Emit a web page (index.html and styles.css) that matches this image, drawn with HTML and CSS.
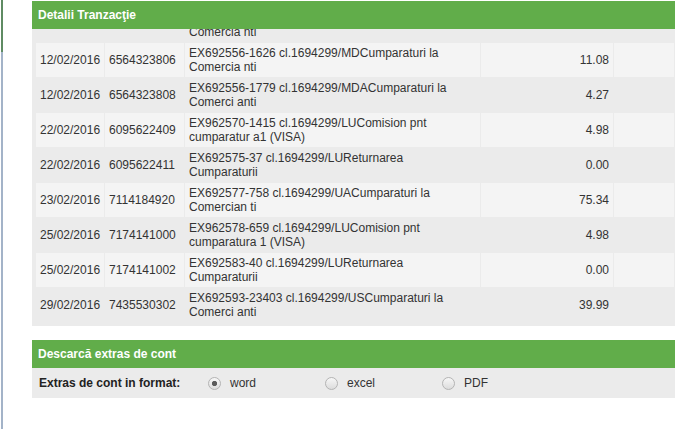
FILE: index.html
```html
<!DOCTYPE html>
<html lang="ro">
<head>
<meta charset="utf-8">
<title>Detalii Tranzacţie</title>
<link rel="stylesheet" href="styles.css">
</head>
<body>
<div class="screen">
  <div class="edge"></div>
  <main class="content">
    <section class="panel">
      <h2 class="panel-title">Detalii Tranzacţie</h2>
      <div class="scroll">
        <table class="tx">
          <colgroup>
            <col class="c-date"><col class="c-ref"><col class="c-desc"><col class="c-amt"><col class="c-extra">
          </colgroup>
          <tbody>
            <tr class="row-gray"><td></td><td></td><td>EX692556-1625 cl.1694299/MDCumparaturi la<br>Comercia nti</td><td class="amt"></td><td></td></tr>
            <tr class="row-light"><td>12/02/2016</td><td>6564323806</td><td>EX692556-1626 cl.1694299/MDCumparaturi la<br>Comercia nti</td><td class="amt">11.08</td><td></td></tr>
            <tr class="row-gray"><td>12/02/2016</td><td>6564323808</td><td>EX692556-1779 cl.1694299/MDACumparaturi la<br>Comerci anti</td><td class="amt">4.27</td><td></td></tr>
            <tr class="row-light"><td>22/02/2016</td><td>6095622409</td><td>EX962570-1415 cl.1694299/LUComision pnt<br>cumparatur a1 (VISA)</td><td class="amt">4.98</td><td></td></tr>
            <tr class="row-gray"><td>22/02/2016</td><td>6095622411</td><td>EX692575-37 cl.1694299/LUReturnarea<br>Cumparaturii</td><td class="amt">0.00</td><td></td></tr>
            <tr class="row-light"><td>23/02/2016</td><td>7114184920</td><td>EX692577-758 cl.1694299/UACumparaturi la<br>Comercian ti</td><td class="amt">75.34</td><td></td></tr>
            <tr class="row-gray"><td>25/02/2016</td><td>7174141000</td><td>EX962578-659 cl.1694299/LUComision pnt<br>cumparatura 1 (VISA)</td><td class="amt">4.98</td><td></td></tr>
            <tr class="row-light"><td>25/02/2016</td><td>7174141002</td><td>EX692583-40 cl.1694299/LUReturnarea<br>Cumparaturii</td><td class="amt">0.00</td><td></td></tr>
            <tr class="row-gray"><td>29/02/2016</td><td>7435530302</td><td>EX692593-23403 cl.1694299/USCumparaturi la<br>Comerci anti</td><td class="amt">39.99</td><td></td></tr>
          </tbody>
        </table>
      </div>
    </section>
    <section class="panel download">
      <h2 class="panel-title">Descarcă extras de cont</h2>
      <form class="format-row">
        <span class="format-label">Extras de cont in format:</span>
        <label class="opt"><input type="radio" name="fmt" value="word" checked><span>word</span></label>
        <label class="opt"><input type="radio" name="fmt" value="excel"><span>excel</span></label>
        <label class="opt"><input type="radio" name="fmt" value="pdf"><span>PDF</span></label>
      </form>
    </section>
  </main>
</div>
</body>
</html>
```
FILE: styles.css
```css
html, body {
  margin: 0;
  padding: 0;
  background: #fff;
  overflow: hidden;
}
body {
  width: 675px;
  height: 429px;
  font-family: "Liberation Sans", Arial, sans-serif;
  font-size: 12px;
  color: #333;
}
.screen {
  display: flex;
  height: 429px;
}
.edge {
  flex: none;
  width: 2px;
  margin-left: 1px;
  background: linear-gradient(#5f8b63 0, #5f8b63 52px, #a3b3c8 52px, #a3b3c8 100%);
}
.content {
  flex: none;
  width: 650px;
  margin-left: 29px;
  padding-top: 1px;
}
.panel-title {
  margin: 0;
  height: 28px;
  line-height: 28px;
  padding-left: 6px;
  background: #61ad4a;
  color: #fff;
  font-size: 12px;
  font-weight: bold;
}
.scroll {
  height: 297px;
  overflow: hidden;
  background: #ebebeb;
  padding-left: 3px;
}
.tx {
  table-layout: fixed;
  width: 640px;
  border-spacing: 1px;
  margin-top: -22px;
}
.c-date { width: 68px; }
.c-ref { width: 79px; }
.c-desc { width: 295px; }
.c-amt { width: 132px; }
.c-extra { width: 60px; }
.tx td {
  padding: 3px 4px;
  line-height: 14px;
  vertical-align: middle;
  white-space: nowrap;
  overflow: hidden;
  color: #333;
}
.row-gray td { background: #ebebeb; }
.row-light td { background: #f4f4f4; }
.tx td.amt { text-align: right; }
.download {
  margin-top: 14px;
}
.format-row {
  display: flex;
  align-items: center;
  height: 30px;
  margin: 0;
  padding-left: 7px;
  background: #ebebeb;
}
.format-label {
  flex: none;
  width: 169px;
  font-weight: bold;
  color: #222;
}
.opt {
  flex: none;
  width: 117px;
  display: flex;
  align-items: center;
  gap: 9px;
  color: #333;
}
.opt input {
  appearance: none;
  -webkit-appearance: none;
  margin: 0;
  width: 13px;
  height: 13px;
  border: 1px solid #b4b4b4;
  border-radius: 50%;
  box-sizing: border-box;
  background: linear-gradient(#f7f7f7, #dcdcdc);
}
.opt input:checked {
  background: radial-gradient(circle, #5a5a5a 0, #5a5a5a 2.2px, transparent 3px), linear-gradient(#f7f7f7, #dcdcdc);
}
```
